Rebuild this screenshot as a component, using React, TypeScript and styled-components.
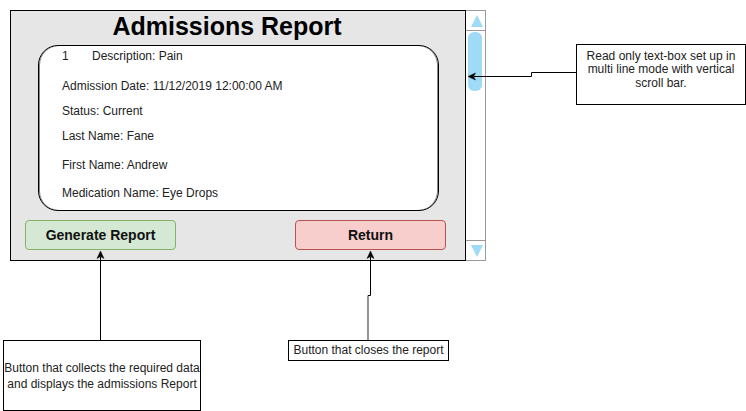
import React from "react";
import styled, { createGlobalStyle } from "styled-components";

const Global = createGlobalStyle`
  html, body { margin: 0; padding: 0; background: #ffffff; }
  body { font-family: "Liberation Sans", Arial, sans-serif; color: #1a1a1a; }
  * { box-sizing: border-box; }
`;

const Canvas = styled.div`
  position: relative;
  width: 746px;
  height: 411px;
  background: #ffffff;
  overflow: hidden;
`;

const Wires = styled.svg`
  position: absolute;
  left: 0;
  top: 0;
  width: 746px;
  height: 411px;
  pointer-events: none;
`;

const Node = styled.div<{ $x: number; $y: number }>`
  position: absolute;
  left: ${(p) => p.$x}px;
  top: ${(p) => p.$y}px;
`;

const Window = styled.div`
  display: flex;
  flex-direction: row;
  height: 251px;
`;

const Panel = styled.div`
  width: 456px;
  height: 251px;
  background: #e6e6e6;
  border: 1px solid #000;
  display: flex;
  flex-direction: column;
`;

const Title = styled.h1`
  margin: 0;
  height: 34px;
  padding-right: 22px;
  font-size: 25px;
  line-height: 30px;
  font-weight: 700;
  text-align: center;
  color: #000;
  font-family: "Liberation Sans", Arial, sans-serif;
`;

const TextBox = styled.div`
  margin-left: 27px;
  width: 401px;
  height: 166px;
  background: #fff;
  border: 1px solid #000;
  border-radius: 20px;
  box-shadow: inset 1px 0 0 #888, inset -1px 0 0 #888;
  padding-left: 23px;
  display: flex;
  flex-direction: column;
`;

const Line = styled.div<{ $mt: number }>`
  margin-top: ${(p) => p.$mt}px;
  font-size: 12px;
  line-height: 14px;
  height: 14px;
  color: #222;
  white-space: nowrap;
  display: flex;
`;

const Index = styled.span`
  width: 30px;
`;

const ButtonRow = styled.div`
  margin-top: 9px;
  padding-left: 14px;
  display: flex;
  gap: 119px;
`;

const Button = styled.button<{ $tone: "green" | "red" }>`
  width: 151px;
  height: 30px;
  border-radius: 4px;
  border: 1px solid ${(p) => (p.$tone === "green" ? "#82b366" : "#b85450")};
  background: ${(p) => (p.$tone === "green" ? "#d5e8d4" : "#f8cecc")};
  font-family: "Liberation Sans", Arial, sans-serif;
  font-size: 14px;
  font-weight: 700;
  color: #111;
  padding: 0;
`;

const ScrollBar = styled.div`
  width: 20px;
  height: 251px;
  border-top: 1px solid #9a9a9a;
  border-right: 1px solid #9a9a9a;
  border-bottom: 1px solid #9a9a9a;
  background: #fff;
  display: flex;
  flex-direction: column;
`;

const ArrowCell = styled.div<{ $bottom?: boolean }>`
  height: 20px;
  display: flex;
  align-items: center;
  justify-content: center;
  padding-left: 2px;
  ${(p) => (p.$bottom ? "border-top: 1px solid #9a9a9a;" : "border-bottom: 1px solid #9a9a9a;")}
`;

const Track = styled.div`
  flex: 1;
  padding: 1px 0 0 2px;
`;

const Thumb = styled.div`
  width: 14px;
  height: 59px;
  border-radius: 6px;
  background: #9fdaf7;
`;

const Note = styled.div<{ $w: number; $h: number; $pb?: number }>`
  width: ${(p) => p.$w}px;
  height: ${(p) => p.$h}px;
  border: 1px solid #000;
  background: #fff;
  display: flex;
  align-items: center;
  justify-content: center;
  text-align: center;
  font-size: 12px;
  line-height: 13.5px;
  color: #222;
  padding-bottom: ${(p) => p.$pb ?? 0}px;
`;

const NoteWide = styled(Note)`
  line-height: 16px;
`;

function Tri({ down }: { down?: boolean }) {
  return (
    <svg width="12" height="12" viewBox="0 0 12 12">
      <polygon points={down ? "0,0 12,0 6,12" : "0,12 12,12 6,0"} fill="#9fdaf7" />
    </svg>
  );
}

function Head({ x, y, dir }: { x: number; y: number; dir: "up" | "left" }) {
  const pts =
    dir === "up"
      ? `${x},${y} ${x - 3.5},${y + 7.5} ${x},${y + 5.5} ${x + 3.5},${y + 7.5}`
      : `${x},${y} ${x + 7.5},${y - 3.5} ${x + 5.5},${y} ${x + 7.5},${y + 3.5}`;
  return <polygon points={pts} fill="#000" stroke="#000" strokeWidth="0.5" />;
}

const lines = [
  { mt: 3, text: "Description: Pain", idx: "1" },
  { mt: 16, text: "Admission Date: 11/12/2019 12:00:00 AM" },
  { mt: 11, text: "Status: Current" },
  { mt: 11, text: "Last Name: Fane" },
  { mt: 15, text: "First Name: Andrew" },
  { mt: 14, text: "Medication Name: Eye Drops" },
];

export default function App() {
  return (
    <>
      <Global />
      <Canvas>
        <Node $x={10} $y={10}>
          <Window>
            <Panel>
              <Title>Admissions Report</Title>
              <TextBox>
                {lines.map((l, i) => (
                  <Line key={i} $mt={l.mt}>
                    {l.idx && <Index>{l.idx}</Index>}
                    <span>{l.text}</span>
                  </Line>
                ))}
              </TextBox>
              <ButtonRow>
                <Button $tone="green">Generate Report</Button>
                <Button $tone="red">Return</Button>
              </ButtonRow>
            </Panel>
            <ScrollBar>
              <ArrowCell>
                <Tri />
              </ArrowCell>
              <Track>
                <Thumb />
              </Track>
              <ArrowCell $bottom>
                <Tri down />
              </ArrowCell>
            </ScrollBar>
          </Window>
        </Node>

        <Node $x={576} $y={44}>
          <Note $w={170} $h={61} $pb={9}>
            Read only text-box set up in
            <br />
            multi line mode with vertical
            <br />
            scroll bar.
          </Note>
        </Node>

        <Node $x={3} $y={340}>
          <NoteWide $w={198} $h={71}>
            Button that collects the required data
            <br />
            and displays the admissions Report
          </NoteWide>
        </Node>

        <Node $x={288} $y={340}>
          <Note $w={161} $h={21}>Button that closes the report</Note>
        </Node>

        <Wires viewBox="0 0 746 411">
          <polyline points="576,72.5 531.5,72.5 531.5,76.5 474,76.5" fill="none" stroke="#000" strokeWidth="1" />
          <Head x={468} y={76.5} dir="left" />
          <polyline points="100.5,340 100.5,257" fill="none" stroke="#000" strokeWidth="1" />
          <Head x={100.5} y={251} dir="up" />
          <polyline points="368,340 368,295.5" fill="none" stroke="#7a7a7a" strokeWidth="1.6" />
          <polyline points="368,295.5 370.5,295.5 370.5,257" fill="none" stroke="#000" strokeWidth="1" />
          <Head x={370.5} y={251} dir="up" />
        </Wires>
      </Canvas>
    </>
  );
}
